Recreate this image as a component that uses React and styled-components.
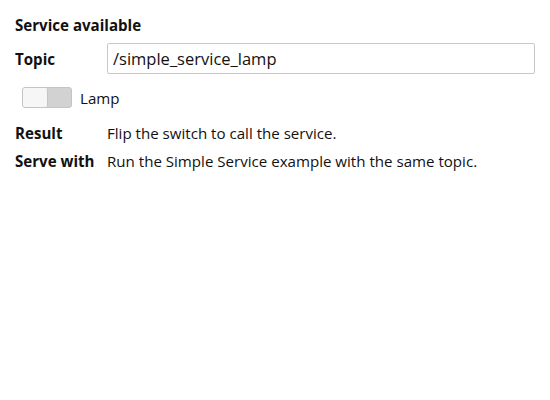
import React, { useState } from 'react';
import styled, { createGlobalStyle } from 'styled-components';

const Global = createGlobalStyle`
  body {
    margin: 0;
    background: #fff;
    font-family: "Open Sans", "Noto Sans", sans-serif;
    font-size: 15.1px;
    color: #111;
  }
`;

function Switch({ on, onToggle }) {
    return (
        <Track $on={on} onClick={onToggle}>
            <Knob $on={on} />
        </Track>
    );
}

function App() {
    const [on, setOn] = useState(false);
    return (
        <>
            <Global />
            <Wrap>
                <Heading>Service available</Heading>
                <Row>
                    <Label>Topic</Label>
                    <TopicInput defaultValue="/simple_service_lamp" />
                </Row>
                <SwitchRow>
                    <Switch on={on} onToggle={() => setOn(!on)} />
                    <span>Lamp</span>
                </SwitchRow>
                <InfoGrid>
                    <Label>Result</Label>
                    <Value>Flip the switch to call the service.</Value>
                    <Label>Serve with</Label>
                    <Value>Run the Simple Service example with the same topic.</Value>
                </InfoGrid>
            </Wrap>
        </>
    );
}

export default App

const Wrap = styled.div`
    padding: 14px 15px 0 15px;
    display: flex;
    flex-direction: column;
`
const Heading = styled.div`
    font-weight: 700;
    line-height: 22px;
`
const Row = styled.div`
    display: flex;
    align-items: center;
    margin-top: 7px;
`
const Label = styled.div`
    font-weight: 700;
    width: 92px;
    flex-shrink: 0;
`
const TopicInput = styled.input`
    flex: 1;
    height: 31px;
    box-sizing: border-box;
    border: 1px solid #c8c8c8;
    border-radius: 2px;
    padding: 0 5px;
    font-family: inherit;
    font-size: 16.5px;
    color: #111;
    outline: none;
`
const SwitchRow = styled.div`
    display: flex;
    align-items: center;
    gap: 8px;
    margin-top: 13px;
    margin-left: 7px;
`
const Track = styled.div`
    width: 50px;
    height: 21px;
    box-sizing: border-box;
    border: 1px solid #c4c4c4;
    border-radius: 3px;
    background: ${p => p.$on ? '#6fa8dc' : '#d2d2d2'};
    display: flex;
    justify-content: ${p => p.$on ? 'flex-end' : 'flex-start'};
    cursor: pointer;
`
const Knob = styled.div`
    width: 24px;
    height: 100%;
    background: #f6f6f6;
    border-right: 1px solid #c4c4c4;
    border-radius: 2px;
`
const InfoGrid = styled.div`
    display: grid;
    grid-template-columns: 92px 1fr;
    row-gap: 8px;
    margin-top: 15px;
    line-height: 20px;
`
const Value = styled.div``
